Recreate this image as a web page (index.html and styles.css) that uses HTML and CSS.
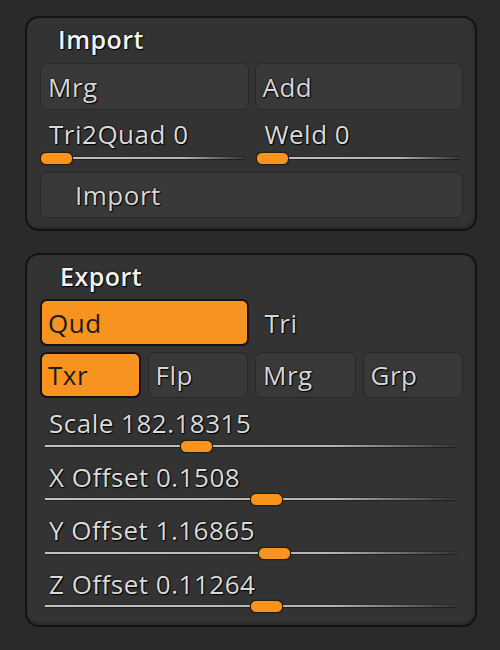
FILE: index.html
```html
<!DOCTYPE html>
<html>
<head>
<meta charset="utf-8">
<link rel="stylesheet" href="styles.css">
</head>
<body>
<div class="wrap">
  <section class="panel panel-import">
    <div class="title">Import</div>
    <div class="row two">
      <div class="btn">Mrg</div>
      <div class="btn">Add</div>
    </div>
    <div class="slider-grid">
      <div class="slider">
        <div class="slider-label">Tri2Quad 0</div>
        <div class="slider-track"><div class="line"></div><div class="thumb" style="left:0%"></div></div>
      </div>
      <div class="slider">
        <div class="slider-label">Weld 0</div>
        <div class="slider-track"><div class="line"></div><div class="thumb" style="left:0%"></div></div>
      </div>
    </div>
    <div class="btn btn-wide">Import</div>
  </section>

  <section class="panel panel-export">
    <div class="title">Export</div>
    <div class="row two">
      <div class="btn on">Qud</div>
      <div class="btn flat">Tri</div>
    </div>
    <div class="row four">
      <div class="btn on">Txr</div>
      <div class="btn">Flp</div>
      <div class="btn">Mrg</div>
      <div class="btn">Grp</div>
    </div>
    <div class="sliders">
      <div class="slider wide">
        <div class="slider-label">Scale 182.18315</div>
        <div class="slider-track"><div class="line"></div><div class="thumb" style="left:32.5%"></div></div>
      </div>
      <div class="slider wide">
        <div class="slider-label">X Offset 0.1508</div>
        <div class="slider-track"><div class="line"></div><div class="thumb" style="left:49.4%"></div></div>
      </div>
      <div class="slider wide">
        <div class="slider-label">Y Offset 1.16865</div>
        <div class="slider-track"><div class="line"></div><div class="thumb" style="left:51.3%"></div></div>
      </div>
      <div class="slider wide">
        <div class="slider-label">Z Offset 0.11264</div>
        <div class="slider-track"><div class="line"></div><div class="thumb" style="left:49.4%"></div></div>
      </div>
    </div>
  </section>
</div>
</body>
</html>
```

FILE: styles.css
```css
* { box-sizing: border-box; }

html, body {
  margin: 0;
  padding: 0;
  background: #2a2a2a;
  width: 500px;
  height: 650px;
  overflow: hidden;
}

body {
  font-family: "Open Sans", "Noto Sans", sans-serif;
  font-size: 26px;
  color: #dadada;
  letter-spacing: 0.5px;
}

.wrap {
  padding: 16px 23px 0 25px;
  display: flex;
  flex-direction: column;
  gap: 22px;
}

.panel {
  background: #333333;
  border: 2px solid #131313;
  border-radius: 14px;
  padding: 0 12px 11px 13px;
  box-shadow: inset -1px -2px 3px rgba(0,0,0,0.25);
}

.panel-export {
  padding-bottom: 12px;
}

.title {
  height: 45px;
  padding-top: 9px;
  padding-left: 18px;
  line-height: 24px;
  font-size: 25px;
  font-weight: 600;
  color: #f2f2f2;
  text-shadow: 0 0 2px #000, 1px 1px 1px #000;
}

.panel-export .title {
  height: 44px;
  padding-left: 20px;
}

.row {
  display: grid;
  height: 47px;
}

.row.two {
  grid-template-columns: 1fr 1fr;
  gap: 6px;
}

.row.four {
  grid-template-columns: repeat(4, 1fr);
  gap: 7px;
  margin-top: 6px;
  height: 46px;
}

.btn {
  display: flex;
  align-items: center;
  padding-left: 7px;
  background: #393939;
  border: 1px solid #282828;
  border-radius: 7px;
  color: #d6d6d6;
  text-shadow: 0 0 2px #000, 1px 1px 1px #000;
  line-height: 24px;
}

.btn.on {
  background: #f7931e;
  border: 2px solid #141414;
  color: #1c1c1c;
  text-shadow: none;
  padding-left: 6px;
}

.btn.flat {
  background: transparent;
  border-color: transparent;
  padding-left: 9px;
}

.btn-wide {
  height: 46px;
  margin-top: 0;
  padding-left: 34px;
}

.slider-grid {
  display: grid;
  grid-template-columns: 1fr 1fr;
  gap: 8px;
  height: 62px;
}

.slider {
  display: flex;
  flex-direction: column;
}

.slider-label {
  height: 41px;
  padding-top: 12px;
  padding-left: 9px;
  line-height: 24px;
  white-space: nowrap;
  text-shadow: 0 0 2px #000, 1px 1px 1px #000;
}

.slider-track {
  position: relative;
  height: 14px;
}

.slider-track .line {
  position: absolute;
  left: 0;
  right: 3px;
  top: 6px;
  height: 2px;
  background: linear-gradient(to right, #c2c2c2 0%, #b5b5b5 70%, rgba(150,150,150,0) 100%);
  box-shadow: 0 1px 0 #202020, 0 -1px 0 #2a2a2a;
}

.thumb {
  position: absolute;
  top: 1px;
  width: 33px;
  height: 13px;
  border-radius: 6px;
  background: #f7931e;
  border: 1px solid #2a1a08;
  box-shadow: 0 0 1px #000;
}

.sliders {
  display: flex;
  flex-direction: column;
  margin-top: 1px;
}

.slider.wide {
  height: 53.5px;
  padding-left: 5px;
  padding-right: 3px;
}

.slider.wide .slider-label {
  padding-left: 4px;
}
```
